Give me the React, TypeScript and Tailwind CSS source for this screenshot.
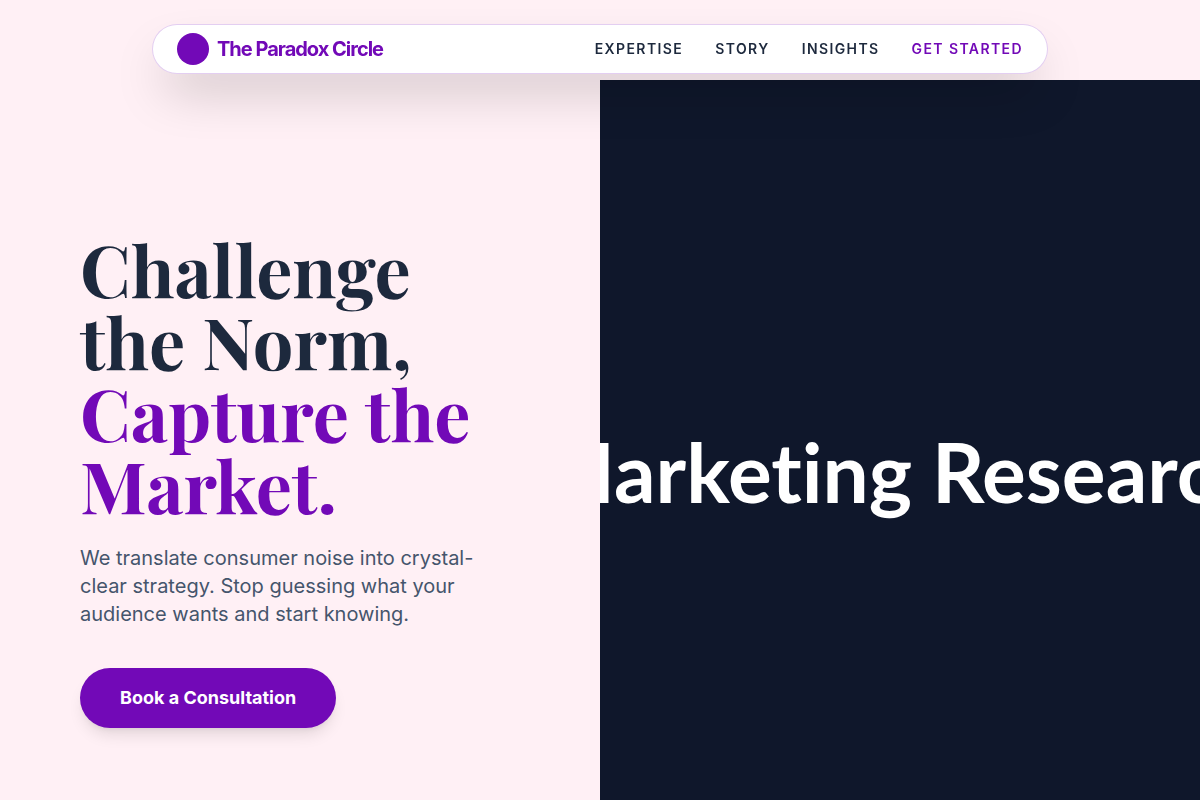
const links = [
  { label: 'Expertise', href: '#expertise' },
  { label: 'Story', href: '#story' },
  { label: 'Insights', href: '#insights' },
];

function Nav() {
  return (
    <nav className="fixed inset-x-0 top-6 z-10 mx-auto flex w-full max-w-4xl items-center justify-between rounded-full border border-[#7209b7]/20 bg-white px-6 py-2 shadow-2xl">
      <a href="#top" className="flex items-center gap-2">
        <span className="size-8 rounded-full bg-[#7209b7]" />
        <span className="text-xl font-bold tracking-tighter text-[#7209b7]">The Paradox Circle</span>
      </a>
      <div className="flex items-center gap-8 text-sm font-semibold uppercase tracking-widest text-slate-800">
        {links.map((l) => (
          <a key={l.label} href={l.href}>{l.label}</a>
        ))}
        <a href="#start" className="text-[#7209b7]">Get Started</a>
      </div>
    </nav>
  );
}

export default function App() {
  return (
    <div id="top" className="min-h-screen bg-[#fff0f5] pt-20 font-['Inter',sans-serif]">
      <Nav />
      <main className="grid min-h-screen grid-cols-2">
        <section className="flex flex-col items-start justify-center p-20">
          <h1 className="mb-6 font-['Playfair_Display','DM_Serif_Display','Liberation_Serif',serif] text-7xl leading-none font-bold text-slate-800">
            Challenge the Norm, <span className="text-[#7209b7]">Capture the Market.</span>
          </h1>
          <p className="mb-10 max-w-md text-xl text-slate-600">
            We translate consumer noise into crystal-clear strategy. Stop guessing what your audience wants and start knowing.
          </p>
          <button className="rounded-full bg-[#7209b7] px-10 py-4 text-lg font-bold text-white shadow-lg">
            Book a Consultation
          </button>
        </section>
        <section className="flex items-center justify-center overflow-hidden bg-slate-900 pb-[18px]">
          <span className="font-['Lato',sans-serif] text-[82px] font-bold whitespace-nowrap text-white [font-variant-ligatures:none]">
            Marketing Research
          </span>
        </section>
      </main>
    </div>
  );
}
